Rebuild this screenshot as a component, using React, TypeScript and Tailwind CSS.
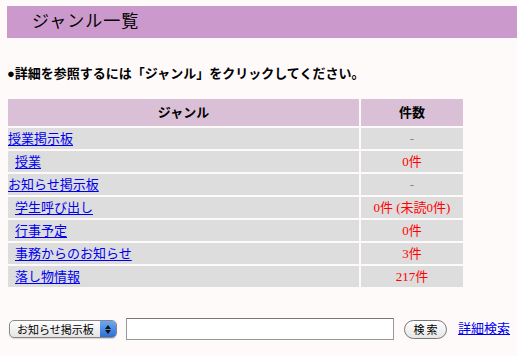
import React from 'react';

type Row = { name: string; count: string; child?: boolean; muted?: boolean };

const rows: Row[] = [
  { name: '授業掲示板', count: '-', muted: true },
  { name: '授業', count: '0件', child: true },
  { name: 'お知らせ掲示板', count: '-', muted: true },
  { name: '学生呼び出し', count: '0件 (未読0件)', child: true },
  { name: '行事予定', count: '0件', child: true },
  { name: '事務からのお知らせ', count: '3件', child: true },
  { name: '落し物情報', count: '217件', child: true },
];

const serif = { fontFamily: '"Liberation Serif", "Noto Sans CJK JP", serif' };

const App: React.FC = () => {
  return (
    <div className="w-[517px] h-[356px] bg-[#fffafa] text-black overflow-hidden pt-[6px]" style={serif}>
      <div className="ml-[7px] h-[32px] bg-[#cc99cc] flex items-center pl-[25px] text-[17px] tracking-[1px]">
        ジャンル一覧
      </div>

      <p className="ml-[7px] mt-[27px] text-[13px] font-bold leading-[18px]">
        ●詳細を参照するには「ジャンル」をクリックしてください。
      </p>

      <table className="ml-[6px] mt-[14px] w-[459px] border-separate border-spacing-[2px] text-[13px]">
        <thead>
          <tr className="bg-[#d9c0d6]">
            <th className="h-[27px] font-bold text-center">ジャンル</th>
            <th className="w-[102px] font-bold text-center">件数</th>
          </tr>
        </thead>
        <tbody>
          {rows.map((r) => (
            <tr key={r.name} className="bg-[#dddddd]">
              <td className={`h-[21px] leading-[21px] ${r.child ? 'pl-[7px]' : 'pl-0'}`}>
                <a href="#" className="text-[#0000ee] underline underline-offset-2">{r.name}</a>
              </td>
              <td className={`text-center ${r.muted ? 'text-[#888888]' : 'text-[#ff0000]'}`}>{r.count}</td>
            </tr>
          ))}
        </tbody>
      </table>

      <div className="mt-[29px] ml-[9px] flex items-center" style={{ fontFamily: '"Noto Sans CJK JP", sans-serif' }}>
        <div className="w-[108px] h-[18px] rounded-[5px] border border-[#888] bg-gradient-to-b from-white to-[#e4e4e4] flex items-center justify-between pl-[7px] pr-0 text-[11px] leading-none shadow-[0_1px_1px_rgba(0,0,0,0.15)]">
          <span>お知らせ掲示板</span>
          <span className="w-[16px] h-[16px] rounded-r-[4px] bg-gradient-to-b from-[#6fa8f0] to-[#2b6fd6] flex flex-col items-center justify-center gap-[1px]">
            <svg width="6" height="4" viewBox="0 0 6 4"><path d="M3 0L6 4H0Z" fill="#111" /></svg>
            <svg width="6" height="4" viewBox="0 0 6 4"><path d="M0 0H6L3 4Z" fill="#111" /></svg>
          </span>
        </div>
        <div className="ml-[9px] w-[268px] h-[22px] border border-[#999] border-t-[#777] bg-white" />
        <button className="ml-[10px] w-[43px] h-[19px] rounded-full border border-[#777] bg-gradient-to-b from-white to-[#e6e6e6] text-[11px] leading-none tracking-[2px] pl-[2px]">
          検索
        </button>
        <a href="#" className="ml-[11px] text-[13px] text-[#0000ee] underline" style={serif}>詳細検索</a>
      </div>
    </div>
  );
};

export default App;
